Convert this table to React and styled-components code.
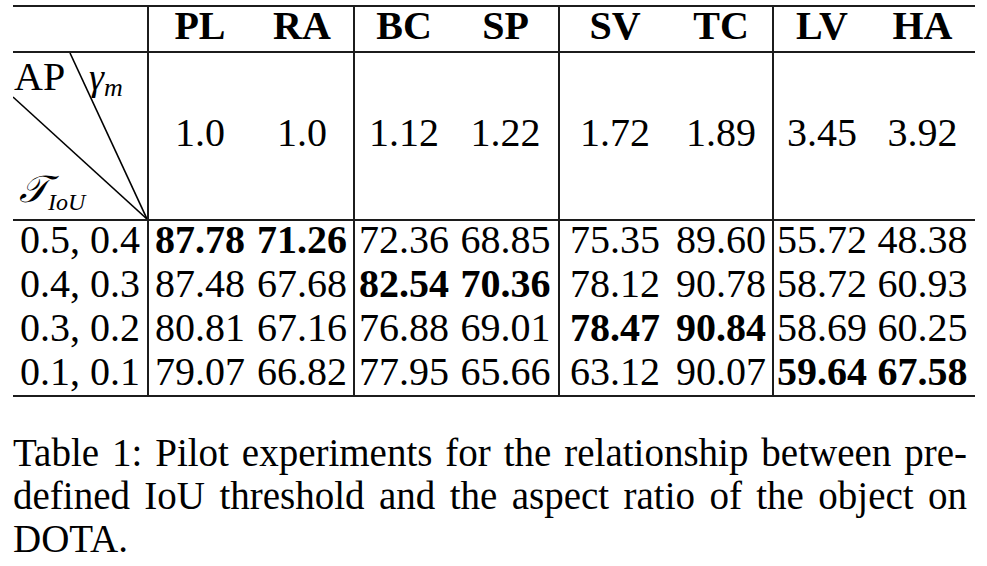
import styled, { createGlobalStyle } from "styled-components";

const SERIF = `"Liberation Serif", "Tinos", "Nimbus Roman", "FreeSerif", "Times New Roman", serif`;

const GlobalStyle = createGlobalStyle`
  body {
    margin: 0;
    background: #ffffff;
    font-family: ${SERIF};
  }
`;

const Page = styled.div`
  width: 987px;
  min-height: 566px;
  padding: 5px 0 0 13px;
  box-sizing: border-box;
  font-family: ${SERIF};
  color: #000000;
`;

const Table = styled.div`
  width: 962px;
  border-top: 2px solid #1c1c1c;
  display: flex;
  flex-direction: column;
`;

const Row = styled.div`
  display: grid;
  grid-template-columns: 134px 104px 102px 100px 105px 112px 102px 98px 105px;
  height: ${(p) => p.$height}px;
  box-sizing: border-box;
  border-bottom: ${(p) => (p.$plain ? "none" : "2px solid #1c1c1c")};
`;

const Cell = styled.div`
  box-sizing: border-box;
  border-left: ${(p) => (p.$sep ? "2px solid #1c1c1c" : "none")};
  font-family: ${SERIF};
  font-size: 40px;
  line-height: 38px;
  font-weight: ${(p) => (p.$bold ? 700 : 400)};
  text-align: center;
  white-space: nowrap;
`;

const HeadCell = styled(Cell)`
  font-weight: 700;
`;

const RatioCell = styled(Cell)`
  display: flex;
  align-items: center;
  justify-content: center;
  padding-bottom: 6px;
`;

const DiagCell = styled.div`
  position: relative;
  font-family: ${SERIF};
`;

const DiagLines = styled.svg`
  position: absolute;
  left: 0;
  top: 0;
  width: 134px;
  height: 166px;
`;

const ApLabel = styled.span`
  position: absolute;
  left: 1px;
  top: 6px;
  font-size: 40px;
  line-height: 36px;
`;

const GammaLabel = styled.span`
  position: absolute;
  left: 76px;
  top: 6px;
  font-size: 38px;
  line-height: 36px;
  font-style: italic;
`;

const IouLabel = styled.span`
  position: absolute;
  left: 6px;
  top: 118px;
  font-size: 38px;
  line-height: 36px;
  font-style: italic;
`;

const Sub = styled.span`
  font-size: ${(p) => p.$size}px;
  position: relative;
  top: ${(p) => p.$drop}px;
`;

const Caption = styled.div`
  width: 954px;
  margin-top: 34px;
  font-family: ${SERIF};
  font-size: 39px;
  line-height: 43px;
`;

const CaptionLine = styled.div`
  text-align: ${(p) => (p.$justify ? "justify" : "left")};
  text-align-last: ${(p) => (p.$justify ? "justify" : "left")};
`;

const groupStart = [1, 3, 5, 7];

const classes = ["PL", "RA", "BC", "SP", "SV", "TC", "LV", "HA"];
const ratios = ["1.0", "1.0", "1.12", "1.22", "1.72", "1.89", "3.45", "3.92"];
const rows = [
  { label: "0.5, 0.4", values: ["87.78", "71.26", "72.36", "68.85", "75.35", "89.60", "55.72", "48.38"], best: [0, 1] },
  { label: "0.4, 0.3", values: ["87.48", "67.68", "82.54", "70.36", "78.12", "90.78", "58.72", "60.93"], best: [2, 3] },
  { label: "0.3, 0.2", values: ["80.81", "67.16", "76.88", "69.01", "78.47", "90.84", "58.69", "60.25"], best: [4, 5] },
  { label: "0.1, 0.1", values: ["79.07", "66.82", "77.95", "65.66", "63.12", "90.07", "59.64", "67.58"], best: [6, 7] },
];

export default function App() {
  return (
    <Page>
      <GlobalStyle />
      <Table>
        <Row $height={46}>
          <Cell />
          {classes.map((c, i) => (
            <HeadCell key={c} $sep={groupStart.includes(i + 1)}>{c}</HeadCell>
          ))}
        </Row>
        <Row $height={168}>
          <DiagCell>
            <DiagLines viewBox="0 0 134 166">
              <line x1="0" y1="44" x2="134" y2="166" stroke="#000" strokeWidth="1.6" />
              <line x1="57" y1="0" x2="134" y2="166" stroke="#000" strokeWidth="1.6" />
            </DiagLines>
            <ApLabel>AP</ApLabel>
            <GammaLabel>γ<Sub $size={26} $drop={6}>m</Sub></GammaLabel>
            <IouLabel>𝒯<Sub $size={24} $drop={8}>IoU</Sub></IouLabel>
          </DiagCell>
          {ratios.map((r, i) => (
            <RatioCell key={i} $sep={groupStart.includes(i + 1)}>{r}</RatioCell>
          ))}
        </Row>
        {rows.map((row, ri) => (
          <Row key={row.label} $height={44} $plain={ri < rows.length - 1}>
            <Cell>{row.label}</Cell>
            {row.values.map((v, i) => (
              <Cell key={i} $sep={groupStart.includes(i + 1)} $bold={row.best.includes(i)}>{v}</Cell>
            ))}
          </Row>
        ))}
      </Table>
      <Caption>
        <CaptionLine $justify>Table 1: Pilot experiments for the relationship between pre-</CaptionLine>
        <CaptionLine $justify>defined IoU threshold and the aspect ratio of the object on</CaptionLine>
        <CaptionLine>DOTA.</CaptionLine>
      </Caption>
    </Page>
  );
}
